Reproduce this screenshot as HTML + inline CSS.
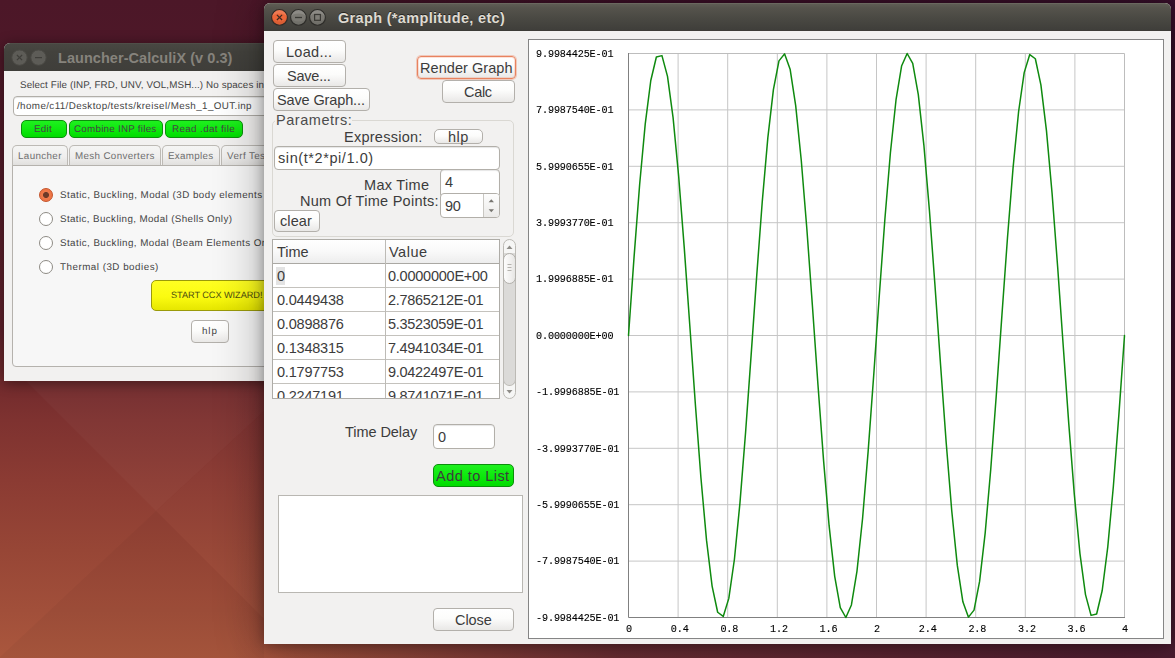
<!DOCTYPE html>
<html lang="en">
<head>
<meta charset="utf-8">
<title>Graph (*amplitude, etc) - Launcher-CalculiX</title>
<style>
html,body{margin:0;padding:0}
body{width:1175px;height:658px;overflow:hidden;position:relative;background:#4a1627;font-family:"Liberation Sans",sans-serif;font-size:14.5px;color:#3c3c3c}
#desktop{position:absolute;left:0;top:0;width:1175px;height:658px;overflow:hidden;
  background:
   linear-gradient(90deg, rgba(56,12,44,0) 0px, rgba(56,12,44,0) 230px, rgba(56,12,44,.55) 620px, rgba(54,14,46,.8) 1175px),
   linear-gradient(180deg, #4c1728 0px, #4e1828 60px, #60212a 330px, #732b2d 385px, #7e3230 420px, #8b3b33 480px, #974636 550px, #a14f3a 610px, #aa573d 658px)}
#desktop svg.wall{position:absolute;left:0;top:0}
.t{position:absolute;white-space:pre;line-height:40px;height:40px;margin:0;padding:0;font-weight:400;font-style:normal;display:block}
.win{position:absolute;background:#f2f1f0;border-radius:6px 6px 0 0}
.win > *, .abs, .pane > *, .grp > *, .tbl > * , .plotframe > *{position:absolute}
.tb{left:0;top:0;right:0;height:28px;border-radius:6px 6px 0 0;box-sizing:border-box}
#graph{left:264px;top:3px;width:907px;height:641px;box-shadow:0 1px 50px 0 rgba(0,0,0,.32),0 1px 14px 0 rgba(0,0,0,.34)}
#graph .tb{background:linear-gradient(180deg,#6a685f 0px,#6a685f 1px,#5e5c54 1px,#55534c 5px,#4a4943 15px,#3f3e3a 27px,#3b3a36 28px)}
#launcher{left:4px;top:43px;width:420px;height:338px;box-shadow:0 2px 14px 0 rgba(0,0,0,.45)}
#launcher .tb{background:linear-gradient(180deg,#4f4e48 0px,#4f4e48 1px,#484742 1px,#43423d 9px,#3f3e3a 28px)}
svg.wbs{position:absolute;left:0;top:0}
.btn{position:absolute;box-sizing:border-box;border:1px solid #b3b0ab;border-radius:4px;background:linear-gradient(180deg,#ffffff 0%,#fcfcfb 45%,#f0efee 80%,#e9e8e6 100%);padding:0;margin:0;font:inherit;color:inherit;overflow:visible}
.btn.focus{border-color:#e8835f;box-shadow:0 0 0 1px rgba(238,140,108,.4), inset 0 0 0 1px rgba(238,140,108,.25)}
.btn.green{background:linear-gradient(180deg,#1ff01f 0%,#0ee90e 50%,#00dc00 100%);border-color:#0b8f0b;border-radius:5px}
.btn.yellow{background:linear-gradient(180deg,#ffff22 0%,#fbfb10 55%,#e6e600 100%);border-color:#9a9a0a;border-radius:5px}
.inp{position:absolute;box-sizing:border-box;border:1px solid #b2afa9;border-radius:4px;background:#fff;box-shadow:inset 0 1px 1px rgba(0,0,0,.10)}
.grp{position:absolute;box-sizing:border-box;border:1px solid #dad8d3;border-radius:5px}
.grplabel{position:absolute;background:#f2f1f0}
.tbl{position:absolute;box-sizing:border-box;border:1px solid #aeaca7;background:#fff;overflow:hidden}
.tbl .hd{left:0;top:0;right:0;height:23px;background:linear-gradient(180deg,#ffffff 0%,#f9f9f9 50%,#ededed 100%);border-bottom:1px solid #aaa8a3}
.tbl .hl{left:0;right:0;height:1px;background:#c4c2bd}
.tbl .vl{top:0;bottom:0;width:1px;background:#bdbbb6}
.sel{background:#e3e3e3}
.sb{position:absolute;box-sizing:border-box;border:1px solid #bcbab5;border-radius:7px;background:#f6f6f5}
.sb .track{position:absolute;left:-1px;right:-1px;top:13px;bottom:12px;background:#dbdad8;border:1px solid #bcbab5;border-radius:0 0 7px 7px;border-top:none}
.sb .thumb{position:absolute;left:-1px;right:-1px;top:13px;height:31px;box-sizing:border-box;border:1px solid #b3b1ac;border-radius:7px;background:linear-gradient(90deg,#fdfdfd,#f1f0ef 60%,#e6e5e3)}
.list{position:absolute;box-sizing:border-box;border:1px solid #b9b7b2;background:#fff}
.plotframe{position:absolute;box-sizing:border-box;border:1px solid #858585;background:#fff;overflow:hidden}
.plotframe svg{left:0;top:0;display:block}
.tab{position:absolute;box-sizing:border-box;border:1px solid #bdbab5;border-bottom:none;border-radius:5px 5px 0 0;background:linear-gradient(180deg,#f5f5f4 0%,#efeeed 55%,#dfdedc 100%)}
.pane{position:absolute;box-sizing:border-box;border:1px solid #b5b2ad;border-radius:0 0 4px 4px;background:#f7f7f7}
.radio{position:absolute;width:14px;height:14px;box-sizing:border-box;border-radius:50%;border:1px solid #8e8b85;background:#fff}
.radio.on{border:1px solid #c4532a;background:radial-gradient(circle at 50% 50%,#6e3a28 0,#6e3a28 2.6px,#ef7a4c 3.4px,#ee7444 6px)}
.spin{position:absolute;box-sizing:border-box;border:1px solid #b2afa9;border-radius:4px;background:#fff;overflow:hidden}
.spin .sbtn{position:absolute;right:0;top:0;bottom:0;width:15px;border-left:1px solid #c9c7c2;background:linear-gradient(180deg,#fdfdfd,#ebeae8)}
.rrow{position:absolute}
.rrow > *{position:absolute}
button.btn{display:block;text-align:left;cursor:default;outline:none;-webkit-appearance:none;appearance:none}

</style>
</head>
<body>
<div id="desktop">
<svg class="wall" width="1175" height="658" viewBox="0 0 1175 658" aria-hidden="true">
 <polygon points="26,381 156,511 264,411 264,381" fill="#ffffff" opacity="0.028"/>
 <polygon points="156,511 264,411 264,619" fill="#ffffff" opacity="0.012"/>
 <polygon points="0,657 156,511 264,619 264,658 0,658" fill="#000000" opacity="0.03"/>
</svg>

<section class="win" id="launcher" aria-label="Launcher-CalculiX (v 0.3)">
 <header class="tb">
  <svg class="wbs" width="70" height="28" viewBox="0 0 70 28" aria-hidden="true">
   <circle cx="15.5" cy="14.6" r="7.7" fill="#5d5c57" stroke="#4a4944" stroke-width="1"/>
   <circle cx="34.5" cy="14.6" r="7.7" fill="#5d5c57" stroke="#4a4944" stroke-width="1"/>
   <path d="M12.9 12l5.2 5.2M18.1 12l-5.2 5.2" stroke="#3f3e3a" stroke-width="1.2" fill="none"/>
   <path d="M31 14.6h7" stroke="#3f3e3a" stroke-width="1.2" fill="none"/>
  </svg>
  <span class="t " style="left:54px;top:-5px;font-size:14.5px;letter-spacing:0.05px;color:#86837c;font-weight:700;">Launcher-CalculiX (v 0.3)</span>
 </header>
 <span class="t " style="left:16px;top:23px;font-size:9.8px;letter-spacing:0.12px;color:#444444;text-rendering:geometricPrecision;">Select File (INP, FRD, UNV, VOL,MSH...) No spaces in</span>
 <div class="inp"  style="left:9px;top:53px;width:387px;height:20px;"><span class="t " style="left:3px;top:-10px;font-size:9.8px;letter-spacing:0.4px;color:#444444;text-rendering:geometricPrecision;">/home/c11/Desktop/tests/kreisel/Mesh_1_OUT.inp</span></div>
 <button class="btn green" type="button" style="left:17px;top:77px;width:46px;height:18px;"><span class="t " style="left:12px;top:-11px;font-size:9.8px;letter-spacing:0.27px;color:#444444;text-rendering:geometricPrecision;">Edit</span></button>
 <button class="btn green" type="button" style="left:65px;top:77px;width:94px;height:18px;"><span class="t " style="left:4px;top:-11px;font-size:9.8px;letter-spacing:0.25px;color:#444444;text-rendering:geometricPrecision;">Combine INP files</span></button>
 <button class="btn green" type="button" style="left:161px;top:77px;width:78px;height:18px;"><span class="t " style="left:6px;top:-11px;font-size:9.8px;letter-spacing:0.38px;color:#444444;text-rendering:geometricPrecision;">Read .dat file</span></button>
 <div class="tab" role="tab" style="left:8px;top:102px;width:56px;height:21px;"><span class="t " style="left:5px;top:-9px;font-size:9.8px;letter-spacing:0.37px;color:#6e6e6e;text-rendering:geometricPrecision;">Launcher</span></div>
 <div class="tab" role="tab" style="left:65px;top:102px;width:92px;height:21px;"><span class="t " style="left:5px;top:-9px;font-size:9.8px;letter-spacing:0.35px;color:#6e6e6e;text-rendering:geometricPrecision;">Mesh Converters</span></div>
 <div class="tab" role="tab" style="left:158px;top:102px;width:58px;height:21px;"><span class="t " style="left:5px;top:-9px;font-size:9.8px;letter-spacing:0.29px;color:#6e6e6e;text-rendering:geometricPrecision;">Examples</span></div>
 <div class="tab" role="tab" style="left:217px;top:102px;width:63px;height:21px;"><span class="t " style="left:5px;top:-9px;font-size:9.8px;letter-spacing:0.4px;color:#6e6e6e;text-rendering:geometricPrecision;">Verf Tests</span></div>
 <div class="pane"  style="left:8px;top:122px;width:404px;height:202px;"></div>
 <div class="rrow" role="radio" aria-checked="true" style="left:0;top:0;width:0;height:0"><div class="radio on"  style="left:35px;top:145px;width:14px;height:14px;"></div><span class="t " style="left:56px;top:133px;font-size:9.8px;letter-spacing:0.45px;color:#444444;text-rendering:geometricPrecision;">Static, Buckling, Modal (3D body elements</span></div>
 <div class="rrow" role="radio" aria-checked="false" style="left:0;top:0;width:0;height:0"><div class="radio"  style="left:35px;top:169px;width:14px;height:14px;"></div><span class="t " style="left:56px;top:157px;font-size:9.8px;letter-spacing:0.39px;color:#444444;text-rendering:geometricPrecision;">Static, Buckling, Modal (Shells Only)</span></div>
 <div class="rrow" role="radio" aria-checked="false" style="left:0;top:0;width:0;height:0"><div class="radio"  style="left:35px;top:193px;width:14px;height:14px;"></div><span class="t " style="left:56px;top:181px;font-size:9.8px;letter-spacing:0.43px;color:#444444;text-rendering:geometricPrecision;">Static, Buckling, Modal (Beam Elements Only)</span></div>
 <div class="rrow" role="radio" aria-checked="false" style="left:0;top:0;width:0;height:0"><div class="radio"  style="left:35px;top:217px;width:14px;height:14px;"></div><span class="t " style="left:56px;top:205px;font-size:9.8px;letter-spacing:0.5px;color:#444444;text-rendering:geometricPrecision;">Thermal (3D bodies)</span></div>
 <button class="btn yellow" type="button" style="left:147px;top:237px;width:139px;height:31px;"><span class="t " style="left:19px;top:-6px;font-size:9.2px;letter-spacing:-0.06px;color:#4e4e10;text-rendering:geometricPrecision;">START CCX WIZARD!</span></button>
 <button class="btn" type="button" style="left:187px;top:277px;width:38px;height:23px;"><span class="t " style="left:10px;top:-9px;font-size:9.8px;letter-spacing:0.9px;color:#444444;text-rendering:geometricPrecision;">hlp</span></button>
</section>

<section class="win" id="graph" aria-label="Graph (*amplitude, etc)">
 <header class="tb">
  <svg class="wbs" width="70" height="28" viewBox="0 0 70 28" aria-hidden="true">
   <g stroke-width="1.1">
    <circle cx="15.5" cy="14.4" r="7.9" fill="#ec6639" stroke="#2f2b27"/>
    <circle cx="34.5" cy="14.4" r="7.9" fill="#7b7973" stroke="#2d2c29"/>
    <circle cx="53.5" cy="14.4" r="7.9" fill="#7b7973" stroke="#2d2c29"/>
   </g>
   <g fill="#ffffff" opacity="0.13">
    <path d="M8.2 14.4a7.3 7.3 0 0 1 14.6 0a7.3 4 0 0 0 -14.6 0z"/>
    <path d="M27.2 14.4a7.3 7.3 0 0 1 14.6 0a7.3 4 0 0 0 -14.6 0z"/>
    <path d="M46.2 14.4a7.3 7.3 0 0 1 14.6 0a7.3 4 0 0 0 -14.6 0z"/>
   </g>
   <g fill="#000000" opacity="0.07">
    <path d="M8.2 14.4a7.3 7.3 0 0 0 14.6 0a7.3 4 0 0 1 -14.6 0z"/>
    <path d="M27.2 14.4a7.3 7.3 0 0 0 14.6 0a7.3 4 0 0 1 -14.6 0z"/>
    <path d="M46.2 14.4a7.3 7.3 0 0 0 14.6 0a7.3 4 0 0 1 -14.6 0z"/>
   </g>
   <path d="M12.9 11.9l5.2 5.1M18.1 11.9l-5.2 5.1" stroke="#3f2a22" stroke-width="1.25" fill="none"/>
   <path d="M31 14.5h7" stroke="#3a3935" stroke-width="1.3" fill="none"/>
   <rect x="50.6" y="11.5" width="5.8" height="5.8" stroke="#3a3935" stroke-width="1.2" fill="#7f7d77"/>
  </svg>
  <span class="t " style="left:74px;top:-5px;font-size:14.5px;letter-spacing:0.33px;color:#dfdbd2;font-weight:700;text-shadow:0 -1px 0 rgba(0,0,0,.55);">Graph (*amplitude, etc)</span>
 </header>
 <button class="btn" type="button" style="left:9px;top:37px;width:73px;height:23px;"><span class="t " style="left:12px;top:-9px;font-size:14.5px;letter-spacing:0.29px;color:#3c3c3c;">Load...</span></button>
 <button class="btn" type="button" style="left:9px;top:61px;width:73px;height:23px;"><span class="t " style="left:13px;top:-9px;font-size:14.5px;letter-spacing:-0.22px;color:#3c3c3c;">Save...</span></button>
 <button class="btn" type="button" style="left:9px;top:85px;width:97px;height:23px;"><span class="t " style="left:3px;top:-9px;font-size:14.5px;letter-spacing:-0.13px;color:#3c3c3c;">Save Graph...</span></button>
 <button class="btn focus" type="button" style="left:153px;top:53px;width:99px;height:23px;"><span class="t " style="left:2px;top:-9px;font-size:14.5px;letter-spacing:0.06px;color:#3c3c3c;">Render Graph</span></button>
 <button class="btn" type="button" style="left:178px;top:77px;width:73px;height:23px;"><span class="t " style="left:21px;top:-9px;font-size:14.5px;letter-spacing:-0.3px;color:#3c3c3c;">Calc</span></button>
 <div class="grp"  style="left:8px;top:117px;width:242px;height:117px;"></div>
 <div class="grplabel"  style="left:11px;top:111px;width:77px;height:14px;"></div><span class="t " style="left:12px;top:97px;font-size:14.5px;letter-spacing:0.54px;color:#4c4c4c;">Parametrs:</span>
 <span class="t " style="left:80px;top:114px;font-size:14.5px;letter-spacing:0.26px;color:#3c3c3c;">Expression:</span>
 <button class="btn" type="button" style="left:170px;top:126px;width:49px;height:15px;border-radius:5px;"><span class="t " style="left:13px;top:-13px;font-size:14.5px;letter-spacing:0.45px;color:#3c3c3c;">hlp</span></button>
 <div class="inp"  style="left:176px;top:166px;width:60px;height:29px;"><span class="t " style="left:4px;top:-8px;font-size:14.5px;letter-spacing:0.0px;color:#3c3c3c;">4</span></div>
 <div class="inp"  style="left:10px;top:143px;width:226px;height:24px;"><span class="t " style="left:3px;top:-9px;font-size:14.5px;letter-spacing:0.58px;color:#3c3c3c;">sin(t*2*pi/1.0)</span></div>
 <span class="t " style="left:100px;top:162px;font-size:14.5px;letter-spacing:0.3px;color:#3c3c3c;">Max Time</span>
 <span class="t " style="left:36px;top:178px;font-size:14.5px;letter-spacing:0.27px;color:#3c3c3c;">Num Of Time Points:</span>
 <div class="spin"  style="left:176px;top:190px;width:60px;height:25px;"><span class="t " style="left:4px;top:-8px;font-size:14.5px;letter-spacing:-0.3px;color:#3c3c3c;">90</span><span class="sbtn"><svg width="15" height="23" viewBox="0 0 15 23" style="position:absolute;left:0;top:0"><path d="M4.6 8.3l2.7-3l2.7 3z" fill="#777570"/><path d="M4.6 15.2l2.7 3l2.7-3z" fill="#777570"/></svg></span></div>
 <button class="btn" type="button" style="left:10px;top:207px;width:46px;height:22px;"><span class="t " style="left:5px;top:-10px;font-size:14.5px;letter-spacing:0.09px;color:#3c3c3c;">clear</span></button>
 <div class="tbl" role="table" style="left:8px;top:236px;width:228px;height:160px"><div class="hd"></div><div class="hl" style="top:47px"></div><div class="hl" style="top:71px"></div><div class="hl" style="top:95px"></div><div class="hl" style="top:119px"></div><div class="hl" style="top:143px"></div><div class="vl" style="left:112px"></div><div class="sel" style="left:3px;top:27px;width:9px;height:18px"></div><span class="t " style="left:4px;top:-8px;font-size:14.5px;letter-spacing:-0.06px;color:#3c3c3c;">Time</span><span class="t " style="left:116px;top:-8px;font-size:14.5px;letter-spacing:0.51px;color:#3c3c3c;">Value</span><span class="t " style="left:4px;top:16px;font-size:14.5px;letter-spacing:0.0px;color:#3c3c3c;">0</span><span class="t " style="left:115px;top:16px;font-size:14.5px;letter-spacing:-0.24px;color:#3c3c3c;">0.0000000E+00</span><span class="t " style="left:4px;top:40px;font-size:14.5px;letter-spacing:-0.21px;color:#3c3c3c;">0.0449438</span><span class="t " style="left:115px;top:40px;font-size:14.5px;letter-spacing:-0.3px;color:#3c3c3c;">2.7865212E-01</span><span class="t " style="left:4px;top:64px;font-size:14.5px;letter-spacing:-0.21px;color:#3c3c3c;">0.0898876</span><span class="t " style="left:115px;top:64px;font-size:14.5px;letter-spacing:-0.3px;color:#3c3c3c;">5.3523059E-01</span><span class="t " style="left:4px;top:88px;font-size:14.5px;letter-spacing:-0.21px;color:#3c3c3c;">0.1348315</span><span class="t " style="left:115px;top:88px;font-size:14.5px;letter-spacing:-0.3px;color:#3c3c3c;">7.4941034E-01</span><span class="t " style="left:4px;top:112px;font-size:14.5px;letter-spacing:-0.21px;color:#3c3c3c;">0.1797753</span><span class="t " style="left:115px;top:112px;font-size:14.5px;letter-spacing:-0.3px;color:#3c3c3c;">9.0422497E-01</span><span class="t " style="left:4px;top:136px;font-size:14.5px;letter-spacing:-0.21px;color:#3c3c3c;">0.2247191</span><span class="t " style="left:115px;top:136px;font-size:14.5px;letter-spacing:-0.3px;color:#3c3c3c;">9.8741071E-01</span></div>
 <div class="sb" style="left:239px;top:236px;width:13px;height:160px"><div class="track"></div><div class="thumb"></div><svg width="13" height="160" viewBox="0 0 13 160" style="position:absolute;left:-1px;top:-1px"><path d="M3.5 10l3-3.5l3 3.5z" fill="#8f8d88"/><path d="M3.5 151l3 3.5l3-3.5z" fill="#8f8d88"/><path d="M4.5 25.5h4M4.5 28.5h4M4.5 31.5h4" stroke="#b5b3ae" stroke-width="1"/></svg></div>
 <span class="t " style="left:81px;top:409px;font-size:14.5px;letter-spacing:-0.06px;color:#3c3c3c;">Time Delay</span>
 <div class="inp"  style="left:169px;top:421px;width:62px;height:25px;"><span class="t " style="left:4px;top:-8px;font-size:14.5px;letter-spacing:0.0px;color:#3c3c3c;">0</span></div>
 <button class="btn green" type="button" style="left:169px;top:461px;width:81px;height:23px;"><span class="t " style="left:2px;top:-9px;font-size:14.5px;letter-spacing:0.46px;color:#3c3c3c;">Add to List</span></button>
 <div class="list"  style="left:14px;top:492px;width:245px;height:98px;"></div>
 <button class="btn" type="button" style="left:169px;top:605px;width:81px;height:23px;"><span class="t " style="left:21px;top:-9px;font-size:14.5px;letter-spacing:-0.05px;color:#3c3c3c;">Close</span></button>
 <div class="plotframe"  style="left:264px;top:36px;width:636px;height:600px;"><svg class="plot" style="will-change:transform" width="634" height="598" viewBox="0 0 634 598">
<rect x="0" y="0" width="634" height="598" fill="#ffffff"/>
<g stroke="#c6c6c6" stroke-width="1" fill="none">
<line x1="149.10" y1="14" x2="149.10" y2="577"/>
<line x1="198.70" y1="14" x2="198.70" y2="577"/>
<line x1="248.30" y1="14" x2="248.30" y2="577"/>
<line x1="297.90" y1="14" x2="297.90" y2="577"/>
<line x1="347.50" y1="14" x2="347.50" y2="577"/>
<line x1="397.10" y1="14" x2="397.10" y2="577"/>
<line x1="446.70" y1="14" x2="446.70" y2="577"/>
<line x1="496.30" y1="14" x2="496.30" y2="577"/>
<line x1="545.90" y1="14" x2="545.90" y2="577"/>
<line x1="100" y1="69.90" x2="595" y2="69.90"/>
<line x1="100" y1="126.30" x2="595" y2="126.30"/>
<line x1="100" y1="182.70" x2="595" y2="182.70"/>
<line x1="100" y1="239.10" x2="595" y2="239.10"/>
<line x1="100" y1="295.50" x2="595" y2="295.50"/>
<line x1="100" y1="351.90" x2="595" y2="351.90"/>
<line x1="100" y1="408.30" x2="595" y2="408.30"/>
<line x1="100" y1="464.70" x2="595" y2="464.70"/>
<line x1="100" y1="521.10" x2="595" y2="521.10"/>
</g>
<path d="M99.5 13.5H595.5V577.5" stroke="#bdbdbd" stroke-width="1" fill="none"/>
<path d="M99.5 13V577.5H596" stroke="#808080" stroke-width="1" fill="none"/>
<polyline points="99.50,295.50 105.07,216.91 110.65,144.54 116.22,84.13 121.79,40.47 127.37,17.01 132.94,15.61 138.51,36.38 144.08,77.67 149.66,136.23 155.23,207.40 160.80,285.55 166.38,364.48 171.95,437.96 177.52,500.14 183.10,546.12 188.67,572.25 194.24,576.45 199.81,558.39 205.39,519.51 210.96,462.89 216.53,393.00 222.11,315.40 227.68,236.21 233.25,161.72 238.83,97.83 244.40,49.60 249.97,20.85 255.54,13.85 261.12,29.17 266.69,65.58 272.26,120.21 277.84,188.72 283.41,265.69 288.98,345.02 294.56,420.43 300.13,485.94 305.70,536.37 311.28,567.72 316.85,577.50 322.42,564.94 327.99,531.04 333.57,478.48 339.14,411.43 344.71,335.19 350.29,255.81 355.86,179.57 361.43,112.52 367.01,59.96 372.58,26.06 378.15,13.50 383.72,23.28 389.30,54.63 394.87,105.06 400.44,170.57 406.02,245.98 411.59,325.31 417.16,402.28 422.74,470.79 428.31,525.42 433.88,561.83 439.46,577.15 445.03,570.15 450.60,541.40 456.17,493.17 461.75,429.28 467.32,354.79 472.89,275.60 478.47,198.00 484.04,128.11 489.61,71.49 495.19,32.61 500.76,14.55 506.33,18.75 511.90,44.88 517.48,90.86 523.05,153.04 528.62,226.52 534.20,305.45 539.77,383.60 545.34,454.77 550.92,513.33 556.49,554.62 562.06,575.39 567.63,573.99 573.21,550.53 578.78,506.87 584.35,446.46 589.93,374.09 595.50,295.50" fill="none" stroke="#0f8a0f" stroke-width="1.5" stroke-linejoin="round" stroke-linecap="round"/>
<g font-family="Liberation Mono, monospace" font-size="11.3" letter-spacing="-0.17" fill="#000000" stroke="#000000" stroke-width="0.12">
<text transform="translate(7.1 17) scale(0.9 1)">9.9984425E-01</text>
<text transform="translate(7.1 73) scale(0.9 1)">7.9987540E-01</text>
<text transform="translate(7.1 130) scale(0.9 1)">5.9990655E-01</text>
<text transform="translate(7.1 186) scale(0.9 1)">3.9993770E-01</text>
<text transform="translate(7.1 242) scale(0.9 1)">1.9996885E-01</text>
<text transform="translate(7.1 299) scale(0.9 1)">0.0000000E+00</text>
<text transform="translate(7.1 355) scale(0.9 1)">-1.9996885E-01</text>
<text transform="translate(7.1 412) scale(0.9 1)">-3.9993770E-01</text>
<text transform="translate(7.1 468) scale(0.9 1)">-5.9990655E-01</text>
<text transform="translate(7.1 524) scale(0.9 1)">-7.9987540E-01</text>
<text transform="translate(7.1 581) scale(0.9 1)">-9.9984425E-01</text>
<text transform="translate(97.1 592) scale(0.9 1)">0</text>
<text transform="translate(141.8 592) scale(0.9 1)">0.4</text>
<text transform="translate(191.4 592) scale(0.9 1)">0.8</text>
<text transform="translate(241.0 592) scale(0.9 1)">1.2</text>
<text transform="translate(290.6 592) scale(0.9 1)">1.6</text>
<text transform="translate(345.1 592) scale(0.9 1)">2</text>
<text transform="translate(389.8 592) scale(0.9 1)">2.4</text>
<text transform="translate(439.4 592) scale(0.9 1)">2.8</text>
<text transform="translate(489.0 592) scale(0.9 1)">3.2</text>
<text transform="translate(538.6 592) scale(0.9 1)">3.6</text>
<text transform="translate(593.1 592) scale(0.9 1)">4</text>
</g></svg></div>
</section>
</div>

</body>
</html>
